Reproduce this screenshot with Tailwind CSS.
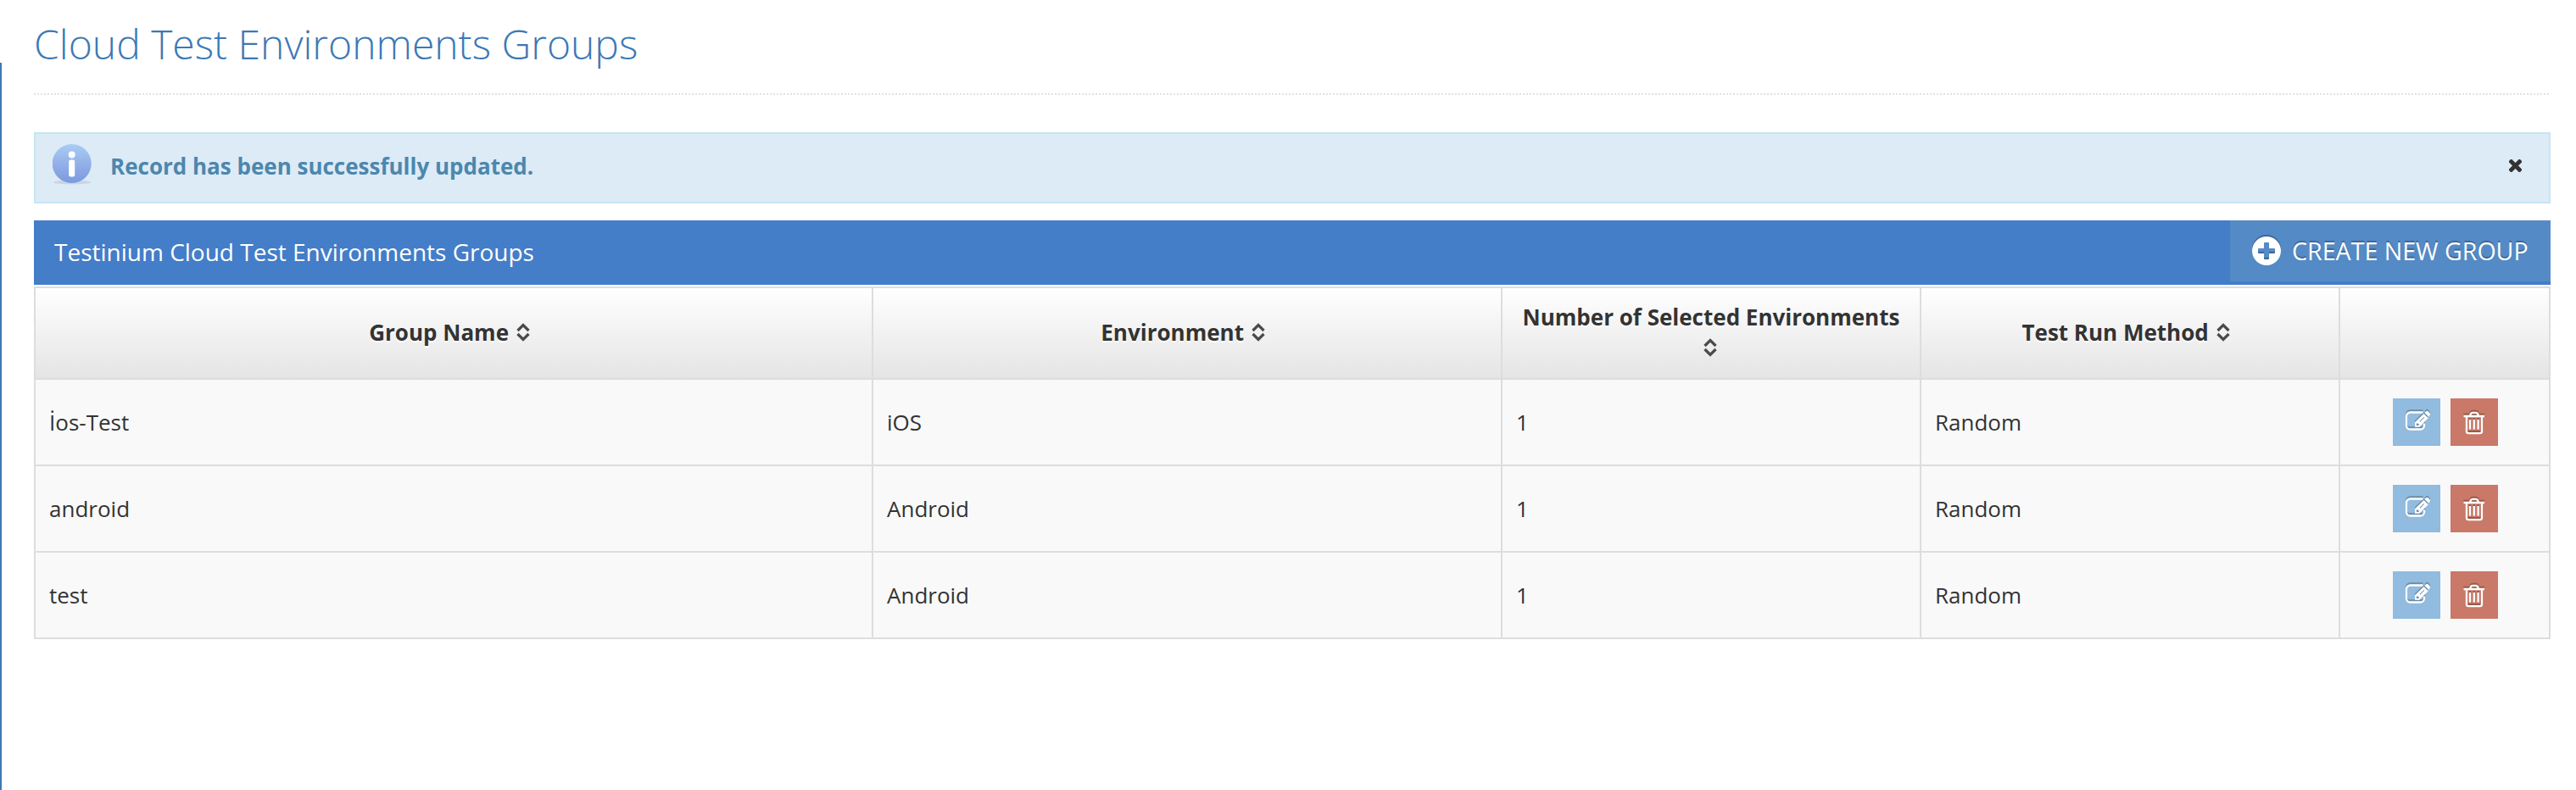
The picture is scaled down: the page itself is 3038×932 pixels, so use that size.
<!DOCTYPE html>
<html lang="en">
<head>
<meta charset="utf-8">
<title>Cloud Test Environments Groups</title>
<script src="https://cdn.jsdelivr.net/npm/@tailwindcss/browser@4"></script>
</head>
<body class="bg-white font-['Open_Sans',sans-serif] text-[26px] leading-9 text-[#333333]">
<svg class="hidden">
  <symbol id="sort" viewBox="0 0 16 22"><path d="M1.500 9 8 2.500l6.500 6.500M1.500 13l6.500 6.500 6.500-6.500" fill="none" stroke="#4a4a4a" stroke-width="3.200"/></symbol>
  <symbol id="edit" viewBox="0 0 31 27">
    <path d="M21.500 4.500H6.500A4.500 4.500 0 0 0 2 9v11A4.500 4.500 0 0 0 6.500 24.500h12A4.500 4.500 0 0 0 23 20v-2.500" fill="none" stroke="currentColor" stroke-width="2.300"/>
    <path fill="currentColor" fill-rule="evenodd" d="M22.500 6 27.700 11.200 17.300 21.700H12V16.300ZM13.800 17.700V20H16.200L17.200 19 14.800 16.700ZM17.500 15 18.200 15.700 23.300 10.600 22.600 9.900Z"/>
    <path fill="currentColor" d="M23.500 5 25.300 3.200Q26.400 2.300 27.500 3.300L29.600 5.400Q30.600 6.500 29.600 7.600L28.500 9.700Z"/>
  </symbol>
  <symbol id="trash" viewBox="0 0 26 30">
    <path d="M.5 8h24.500M8 7.500 9 5Q9.500 3.800 11 3.800h4Q16.500 3.800 17 5L18 7.500M3.900 8V25.500Q3.900 28.200 6.500 28.200h13Q22 28.200 22 25.500V8M8 12v11.500M12.800 12v11.500M17.600 12v11.500" fill="none" stroke="currentColor" stroke-width="2.300"/>
  </symbol>
</svg>
<div class="flex flex-col h-[932px] w-[3038px]">
  <header class="h-[74px] pl-10 pt-[17px]">
    <h1 class="text-5xl leading-[70px] font-light text-[#3c79b5] whitespace-nowrap">Cloud Test Environments Groups</h1>
  </header>
  <main class="flex-1 border-l-2 border-[#3c79b5] pl-[38px] pr-[30px] pt-9">
    <div class="h-0.5 bg-[repeating-linear-gradient(90deg,#e2e2e2_0_2px,transparent_2px_4px)]"></div>
    <div class="mt-11 h-[84px] border-2 border-[#c5e6f0] bg-[#ddebf7] flex items-center pl-5 pr-8 text-[#4c87ad]">
      <svg class="size-12 -mt-2" viewBox="0 0 48 48">
        <defs><linearGradient id="ball" x1="0" y1="0" x2="0" y2="1"><stop offset="0" stop-color="#a9cdf5"/><stop offset=".5" stop-color="#93b0e8"/><stop offset="1" stop-color="#7c99de"/></linearGradient></defs>
        <ellipse cx="23" cy="45" rx="22" ry="2.500" fill="#b9c8dc" opacity=".6"/>
        <circle cx="22.700" cy="23" r="23" fill="url(#ball)"/>
        <circle cx="22.700" cy="12.500" r="4" fill="#fff"/><rect x="19.200" y="18.500" width="7" height="20" rx="2" fill="#fff"/>
      </svg>
      <p class="ml-5 -mt-1 font-bold flex-1">Record has been successfully updated.</p>
      <svg class="size-[15px] -mt-1.5" viewBox="0 0 14 14"><path d="M2.500 2.500l9 9m0-9l-9 9" stroke="#333" stroke-width="4.500" stroke-linecap="square"/></svg>
    </div>
    <div class="mt-5 h-[76px] bg-[#447dc8] flex justify-between text-white">
      <h2 class="pl-6 text-[28px] leading-[74px]">Testinium Cloud Test Environments Groups</h2>
      <a class="h-[72px] w-[378px] bg-[#548ac6] flex items-center pl-[26px] text-[28.6px] whitespace-nowrap [text-shadow:0_-2px_0_rgba(0,0,0,.25)]">
        <svg class="w-[34px] h-9 drop-shadow-[0_-2px_0_rgba(0,0,0,.25)]" viewBox="0 0 34 36"><path fill="#fff" fill-rule="evenodd" d="M17 1a17 17 0 1 0 0 34a17 17 0 1 0 0-34ZM15 8h4q1 0 1 1v6h6q1 0 1 1v4q0 1-1 1h-6v6q0 1-1 1h-4q-1 0-1-1v-6h-6q-1 0-1-1v-4q0-1 1-1h6V9q0-1 1-1Z"/></svg>
        <span class="ml-[13px]">CREATE NEW GROUP</span>
      </a>
    </div>
    <table class="mt-0.5 w-full table-fixed border-separate border-spacing-0 border-t-2 border-l-2 border-[#dddddd]">
      <colgroup><col class="w-[988px]"><col class="w-[742px]"><col class="w-[494px]"><col class="w-[494px]"><col></colgroup>
      <thead>
        <tr class="h-[108px] bg-linear-to-b from-white to-[#e4e4e4] font-bold text-center [text-shadow:0_2px_0_#fff] [&>th]:border-r-2 [&>th]:border-b-2 [&>th]:border-[#dddddd] [&>th]:px-4 [&>th]:pt-0 [&>th]:pb-0.5">
          <th>Group Name <svg class="inline w-4 h-[22px] ml-0.5 mr-2.5 align-[-1px]"><use href="#sort"/></svg></th>
          <th>Environment <svg class="inline w-4 h-[22px] ml-0.5 mr-2.5 align-[-1px]"><use href="#sort"/></svg></th>
          <th>Number of Selected Environments <svg class="inline w-4 h-[22px] ml-0.5 mr-1 align-[-1px]"><use href="#sort"/></svg></th>
          <th>Test Run Method <svg class="inline w-4 h-[22px] ml-0.5 mr-2.5 align-[-1px]"><use href="#sort"/></svg></th>
          <th></th>
        </tr>
      </thead>
      <tbody id="rows" class="[&_td]:border-r-2 [&_td]:border-b-2 [&_td]:border-[#dddddd] [&_td]:px-4 [&_td]:py-0 [&>tr]:h-[102px] [&>tr]:bg-[#f9f9f9]">
      </tbody>
    </table>
  </main>
</div>
<script>
const rows = [["İos-Test","iOS"],["android","Android"],["test","Android"]];
document.getElementById("rows").innerHTML = rows.map(([g, e]) => `<tr><td>${g}</td><td>${e}</td><td>1</td><td>Random</td><td>
<div class="flex gap-3 pl-[46px] text-white">
<a class="size-14 bg-[#91bbdf] pt-[12px] pl-3.5"><svg class="w-[31px] h-[27px] drop-shadow-[0_-2px_0_rgba(0,0,0,.25)]"><use href="#edit"/></svg></a>
<a class="size-14 bg-[#ca7867] pt-[13px] pl-[15px]"><svg class="w-[26px] h-[30px] drop-shadow-[0_-2px_0_rgba(0,0,0,.25)]"><use href="#trash"/></svg></a>
</div></td></tr>`).join("");
</script>
</body>
</html>
